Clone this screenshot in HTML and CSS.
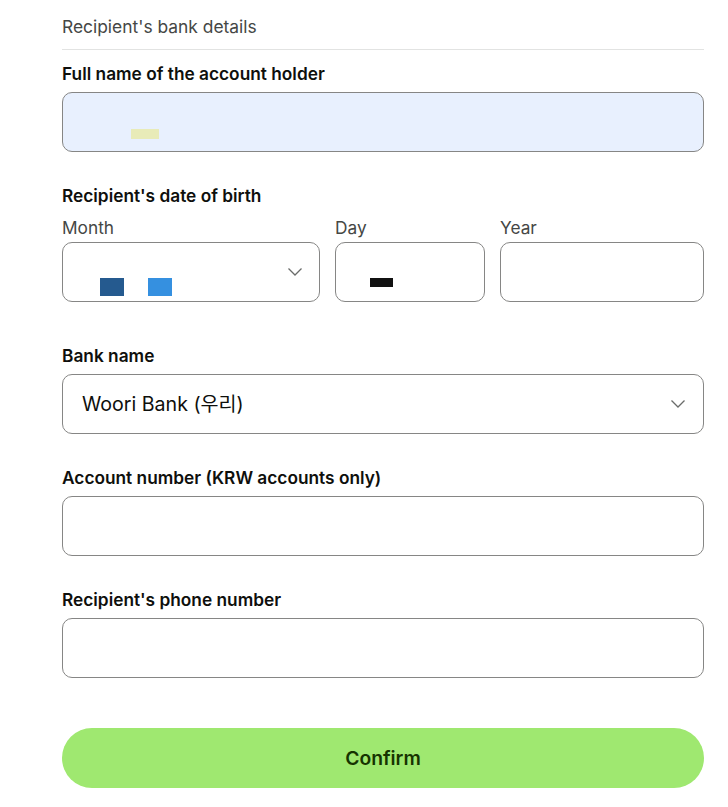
FILE: index.html
```html
<!DOCTYPE html>
<html lang="en">
<head>
<meta charset="utf-8">
<title>Recipient's bank details</title>
<link rel="stylesheet" href="styles.css">
</head>
<body>
<main class="form">
  <h2 class="section-title">Recipient's bank details</h2>

  <div class="field">
    <label class="label">Full name of the account holder</label>
    <div class="input input-autofill"><span class="blot blot-name"></span></div>
  </div>

  <div class="field field-dob">
    <label class="label">Recipient's date of birth</label>
    <div class="dob-grid">
      <div class="dob-col">
        <span class="sublabel">Month</span>
        <div class="input select select-month">
          <span class="blots">
            <span class="blot blot-dark"></span>
            <span class="blot blot-light"></span>
          </span>
          <svg class="chevron" width="16" height="10" viewBox="0 0 16 10"><path d="M1.5 1.5 L8 8 L14.5 1.5" fill="none" stroke="#6a6c6a" stroke-width="1.3"/></svg>
        </div>
      </div>
      <div class="dob-col">
        <span class="sublabel">Day</span>
        <div class="input"><span class="blot blot-black"></span></div>
      </div>
      <div class="dob-col">
        <span class="sublabel">Year</span>
        <div class="input"></div>
      </div>
    </div>
  </div>

  <div class="field">
    <label class="label">Bank name</label>
    <div class="input select">
      <span class="value">Woori Bank (우리)</span>
      <svg class="chevron" width="16" height="10" viewBox="0 0 16 10"><path d="M1.5 1.5 L8 8 L14.5 1.5" fill="none" stroke="#6a6c6a" stroke-width="1.3"/></svg>
    </div>
  </div>

  <div class="field">
    <label class="label">Account number (KRW accounts only)</label>
    <div class="input"></div>
  </div>

  <div class="field">
    <label class="label">Recipient's phone number</label>
    <div class="input"></div>
  </div>

  <button class="confirm" type="button">Confirm</button>
</main>
</body>
</html>
```

FILE: styles.css
```css
* { box-sizing: border-box; }

html, body {
  margin: 0;
  padding: 0;
  background: #ffffff;
}

body {
  font-family: Inter, "Noto Sans CJK KR", "Noto Sans", sans-serif;
  color: #0e0f0c;
}

.form {
  width: 642px;
  margin-left: 62px;
  padding-top: 15px;
  display: flex;
  flex-direction: column;
}

.section-title {
  margin: 0;
  font-size: 17.4px;
  font-weight: 400;
  line-height: 24px;
  color: #454745;
  padding-bottom: 10px;
  border-bottom: 1px solid #e2e3e2;
}

.field {
  display: flex;
  flex-direction: column;
  margin-top: 32px;
}

.form .section-title + .field { margin-top: 12px; }

.label {
  font-size: 17.3px;
  font-weight: 600;
  line-height: 24px;
  margin-bottom: 6px;
}

.input {
  height: 60px;
  border: 1px solid #868685;
  border-radius: 10px;
  background: #fff;
  position: relative;
  display: flex;
  align-items: center;
}

.input-autofill { background: #e8f0fe; }

.select { padding: 0 17px 0 19px; }

.select-month { padding-right: 16px; }

.value {
  font-size: 19.6px;
  line-height: 24px;
  color: #0e0f0c;
}

.chevron { display: block; margin-left: auto; }

.field-dob .label { margin-bottom: 8px; }

.dob-grid {
  display: grid;
  grid-template-columns: 258px 150px 1fr;
  column-gap: 15px;
  margin-bottom: 10px;
}

.dob-col { display: flex; flex-direction: column; }

.sublabel {
  font-size: 17.3px;
  line-height: 24px;
  color: #454745;
  margin-bottom: 2px;
}

.blot { display: block; }

.blot-name {
  position: absolute;
  left: 68px;
  top: 36px;
  width: 28px;
  height: 10px;
  background: #e8ebb8;
}

.blots {
  position: absolute;
  left: 37px;
  top: 35px;
  display: flex;
  gap: 24px;
}

.blot-dark { width: 24px; height: 18px; background: #255a8f; }
.blot-light { width: 24px; height: 18px; background: #3590e0; }

.blot-black {
  position: absolute;
  left: 34px;
  top: 35px;
  width: 23px;
  height: 9px;
  background: #111111;
}

.confirm {
  margin-top: 50px;
  height: 60px;
  border: none;
  border-radius: 30px;
  background: #9fe870;
  color: #163300;
  font-family: Inter, sans-serif;
  font-size: 19.3px;
  font-weight: 600;
  cursor: pointer;
}
```
